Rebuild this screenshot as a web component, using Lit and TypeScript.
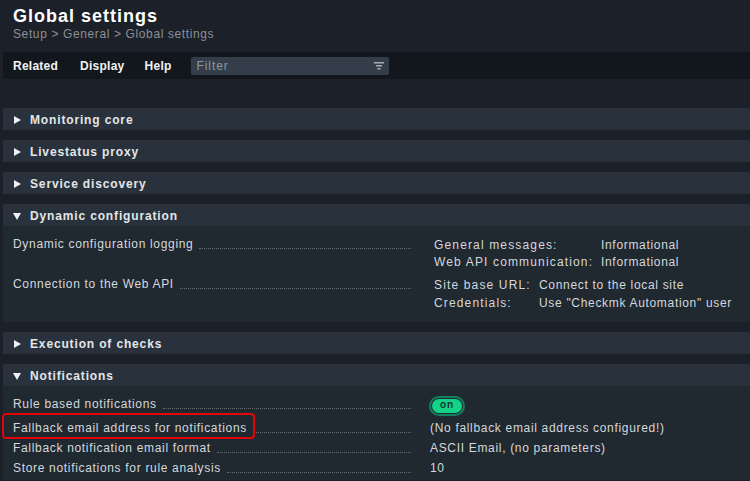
import { html, css, LitElement } from 'lit';
import { customElement } from 'lit/decorators.js';

@customElement('app-root')
export class AppRoot extends LitElement {
  static styles = css`
    * { box-sizing: border-box; }
    :host {
      display: block;
      width: 750px;
      height: 481px;
      overflow: hidden;
      background: #1c2129;
      font-family: "Liberation Sans", Arial, sans-serif;
      font-size: 12px;
      letter-spacing: 0.68px;
      color: #d4d8dc;
    }
    .head { height: 52px; padding: 5px 0 0 13px; }
    h1 {
      margin: 0;
      height: 22px;
      font-size: 18px;
      line-height: 22px;
      font-weight: bold;
      letter-spacing: 1px;
      color: #fff;
    }
    .crumbs { margin-top: 1px; font-size: 12px; line-height: 13px; color: #8b9097; letter-spacing: 0.62px; }
    .menu {
      display: flex;
      align-items: center;
      height: 27px;
      margin-left: 3px;
      padding-left: 10px;
      background: #12171e;
      font-weight: bold;
      color: #f2f3f4;
      letter-spacing: 0.25px;
    }
    .menu span { margin-right: 20px; }
    .menu span:first-child { margin-right: 22px; }
    .menu span:nth-child(3) { margin-right: 19px; }
    .filter {
      display: flex;
      align-items: center;
      justify-content: space-between;
      width: 198px;
      height: 18px;
      padding: 0 5px 0 6px;
      border-radius: 2px;
      background: #333e4a;
      color: #8f969d;
      font-weight: normal;
      letter-spacing: 0.9px;
    }
    .sections { padding: 29px 0 0 3px; }
    section { margin-bottom: 10px; }
    .title {
      display: flex;
      align-items: center;
      height: 22px;
      padding: 1px 0 0 10px;
      background: #29323c;
      border-radius: 2px 2px 0 0;
      font-weight: bold;
      letter-spacing: 0.85px;
      color: #e4e6e8;
    }
    .title svg { width: 8px; height: 8px; margin-right: 9px; flex: none; }
    .body { background: #202830; }
    .dyn { height: 96px; padding-top: 10px; }
    .notif { padding-top: 10px; }
    .row { display: flex; align-items: flex-start; }
    .legend {
      display: flex;
      align-items: flex-end;
      width: 408px;
      padding-left: 10px;
      flex: none;
      line-height: 16px;
      white-space: nowrap;
    }
    .dots {
      flex: 1;
      height: 1px;
      margin: 0 0 3px 6px;
      border-bottom: 1px dotted #636a72;
    }
    .val { padding-left: 19px; line-height: 16px; white-space: nowrap; }
    .dyn .row:nth-child(1) { height: 40px; }
    .dyn .val { padding-left: 23px; }
    .pairs { display: grid; column-gap: 9px; line-height: 16px; padding-top: 1px; }
    .pairs span:nth-child(odd) { letter-spacing: 1.15px; }
    .pairs.log { grid-template-columns: 158px auto; row-gap: 1px; }
    .pairs.web { grid-template-columns: 96px auto; row-gap: 2px; }
    .n1 { height: 24px; }
    .n2 { height: 20px; position: relative; }
    .n3 { height: 20px; }
    .n4 { height: 20px; }
    .toggle {
      display: inline-flex;
      align-items: center;
      justify-content: center;
      width: 36px;
      height: 20px;
      margin: -1px 0 0 -1px;
      border: 2px solid #13805f;
      border-radius: 10px;
      padding: 1px;
      background: #202830;
      background-clip: padding-box;
    }
    .toggle b {
      display: block;
      width: 100%;
      height: 100%;
      border-radius: 7px;
      background: #13d389;
      color: #14352c;
      font-size: 10px;
      line-height: 12px;
      text-align: center;
      letter-spacing: 1px;
    }
    .mark {
      position: absolute;
      left: -1px;
      top: -7px;
      width: 253px;
      height: 26px;
      border: 2px solid #e4050b;
      border-radius: 4px;
    }
  `;

  private arrow(open: boolean) {
    return open
      ? html`<svg viewBox="0 0 8 8"><path d="M0 1h8L4 8z" fill="#f0f1f2" /></svg>`
      : html`<svg viewBox="0 0 8 8"><path d="M1 0l7 4-7 4z" fill="#f0f1f2" /></svg>`;
  }

  private closed(name: string) {
    return html`<section><div class="title">${this.arrow(false)}${name}</div></section>`;
  }

  render() {
    return html`
      <div class="head">
        <h1>Global settings</h1>
        <div class="crumbs">Setup &gt; General &gt; Global settings</div>
      </div>
      <div class="menu">
        <span>Related</span><span>Display</span><span>Help</span>
        <div class="filter">
          Filter
          <svg width="10" height="9" viewBox="0 0 10 9">
            <path d="M0 1h10v1.500H0zM2 4h6v1.500H2zM3.500 7h3v1.500h-3z" fill="#a9aeb3" />
          </svg>
        </div>
      </div>
      <div class="sections">
        ${this.closed('Monitoring core')}
        ${this.closed('Livestatus proxy')}
        ${this.closed('Service discovery')}
        <section>
          <div class="title">${this.arrow(true)}Dynamic configuration</div>
          <div class="body dyn">
            <div class="row">
              <div class="legend">Dynamic configuration logging<i class="dots"></i></div>
              <div class="val pairs log">
                <span>General messages:</span><span>Informational</span>
                <span>Web API communication:</span><span>Informational</span>
              </div>
            </div>
            <div class="row">
              <div class="legend">Connection to the Web API<i class="dots"></i></div>
              <div class="val pairs web">
                <span>Site base URL:</span><span>Connect to the local site</span>
                <span>Credentials:</span><span>Use "Checkmk Automation" user</span>
              </div>
            </div>
          </div>
        </section>
        ${this.closed('Execution of checks')}
        <section>
          <div class="title">${this.arrow(true)}Notifications</div>
          <div class="body notif">
            <div class="row n1">
              <div class="legend">Rule based notifications<i class="dots"></i></div>
              <div class="val"><span class="toggle"><b>on</b></span></div>
            </div>
            <div class="row n2">
              <div class="legend">Fallback email address for notifications<i class="dots"></i></div>
              <div class="val">(No fallback email address configured!)</div>
              <div class="mark"></div>
            </div>
            <div class="row n3">
              <div class="legend">Fallback notification email format<i class="dots"></i></div>
              <div class="val">ASCII Email, (no parameters)</div>
            </div>
            <div class="row n4">
              <div class="legend">Store notifications for rule analysis<i class="dots"></i></div>
              <div class="val">10</div>
            </div>
          </div>
        </section>
      </div>
    `;
  }
}
